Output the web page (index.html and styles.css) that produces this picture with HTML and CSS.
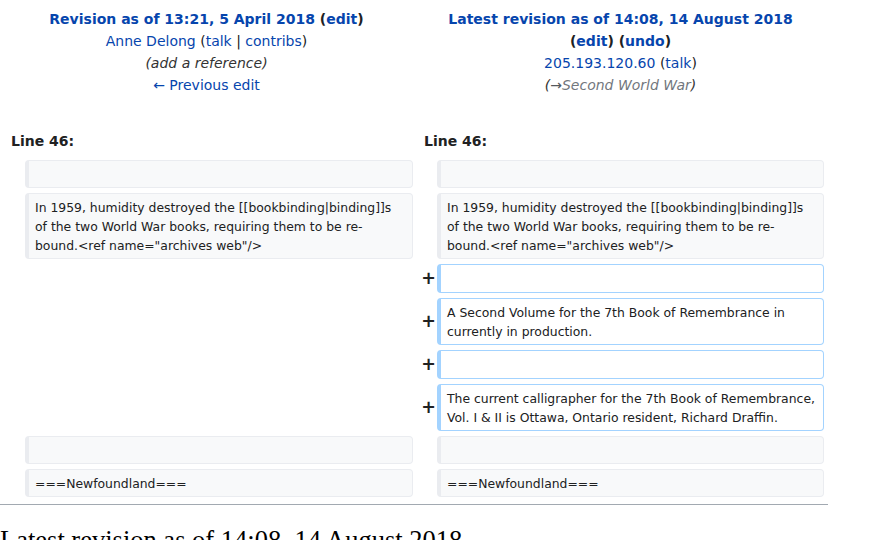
FILE: index.html
```html
<!DOCTYPE html>
<html>
<head>
<meta charset="utf-8">
<title>Diff</title>
<link rel="stylesheet" href="styles.css">
</head>
<body>
<div class="page">
  <div class="titles">
    <div class="title-cell">
      <div><strong><a class="link">Revision as of 13:21, 5 April 2018</a> <span class="paren">(<a class="link">edit</a>)</span></strong></div>
      <div><a class="link">Anne Delong</a> <span class="paren">(<a class="link">talk</a> | <a class="link">contribs</a>)</span></div>
      <div class="comment">(add a reference)</div>
      <div><a class="link">← Previous edit</a></div>
    </div>
    <div class="title-cell">
      <div><strong><a class="link">Latest revision as of 14:08, 14 August 2018</a> <span class="paren">(<a class="link">edit</a>)</span> <span class="paren">(<a class="link">undo</a>)</span></strong></div>
      <div><a class="link">205.193.120.60</a> <span class="paren">(<a class="link">talk</a>)</span></div>
      <div class="comment">(<span class="arrow">→</span><span class="auto">Second World War</span>)</div>
    </div>
  </div>

  <div class="linenos">
    <div class="lineno">Line 46:</div>
    <div class="lineno">Line 46:</div>
  </div>

  <div class="diff">
    <div class="marker"></div>
    <div class="box context left"></div>
    <div class="marker"></div>
    <div class="box context"></div>

    <div class="marker"></div>
    <div class="box context left">In 1959, humidity destroyed the [[bookbinding|binding]]s of the two World War books, requiring them to be re-bound.&lt;ref name="archives web"/&gt;</div>
    <div class="marker"></div>
    <div class="box context">In 1959, humidity destroyed the [[bookbinding|binding]]s of the two World War books, requiring them to be re-bound.&lt;ref name="archives web"/&gt;</div>

    <div class="spacer"></div>
    <div class="marker">+</div>
    <div class="box added empty"></div>

    <div class="spacer"></div>
    <div class="marker">+</div>
    <div class="box added">A Second Volume for the 7th Book of Remembrance in currently in production.</div>

    <div class="spacer"></div>
    <div class="marker">+</div>
    <div class="box added empty"></div>

    <div class="spacer"></div>
    <div class="marker">+</div>
    <div class="box added">The current calligrapher for the 7th Book of Remembrance, Vol. I &amp; II is Ottawa, Ontario resident, Richard Draffin.</div>

    <div class="marker"></div>
    <div class="box context left"></div>
    <div class="marker"></div>
    <div class="box context"></div>

    <div class="marker"></div>
    <div class="box context left">===Newfoundland===</div>
    <div class="marker"></div>
    <div class="box context">===Newfoundland===</div>
  </div>

  <hr class="rule">
  <h2 class="heading">Latest revision as of 14:08, 14 August 2018</h2>
</div>
</body>
</html>
```

FILE: styles.css
```css
html, body {
  margin: 0;
  padding: 0;
  background: #ffffff;
}

body {
  font-family: "DejaVu Sans", sans-serif;
  color: #202122;
  overflow: hidden;
}

.page {
  width: 828px;
}

.titles {
  display: grid;
  grid-template-columns: 413px 415px;
  padding-top: 8px;
  font-size: 14px;
  line-height: 22px;
  text-align: center;
}

.title-cell {
  padding: 0 12px;
}

.link {
  color: #0645ad;
  text-decoration: none;
}

.paren {
  color: #202122;
}

.comment {
  font-style: italic;
  color: #333333;
}

.arrow {
  color: #54595d;
  font-style: normal;
}

.auto {
  color: #72777d;
}

.linenos {
  display: grid;
  grid-template-columns: 413px 415px;
  margin-top: 34px;
  font-size: 14px;
  line-height: 22px;
  font-weight: bold;
}

.lineno {
  padding-left: 11px;
}

.diff {
  display: grid;
  grid-template-columns: 25px 388px 24px 387px;
  row-gap: 5px;
  margin-top: 8px;
}

.spacer {
  grid-column: span 2;
}

.marker {
  display: flex;
  align-items: center;
  justify-content: flex-end;
  padding-right: 1px;
  font-weight: bold;
  font-size: 17.5px;
  line-height: 1;
  color: #202122;
}

.box {
  font-size: 12.4px;
  line-height: 19px;
  min-height: 19px;
  padding: 3.5px 6px;
  border-style: solid;
  border-width: 1px 1px 1px 4px;
  border-radius: 4px;
  white-space: pre-wrap;
  word-wrap: break-word;
  color: #202122;
}

.left {
  padding-right: 8px;
}

.context {
  background: #f8f9fa;
  border-color: #eaecf0;
}

.added {
  background: #ffffff;
  border-color: #a3d3ff;
}

.empty {
  min-height: 20px;
}

.rule {
  margin: 7px 0 0 0;
  height: 0;
  border: 0;
  border-top: 1px solid #a2a9b1;
}

.heading {
  margin: 20px 0 0 0;
  font-family: "Liberation Serif", serif;
  font-weight: normal;
  font-size: 26.5px;
  line-height: 30px;
  color: #000000;
}
```
